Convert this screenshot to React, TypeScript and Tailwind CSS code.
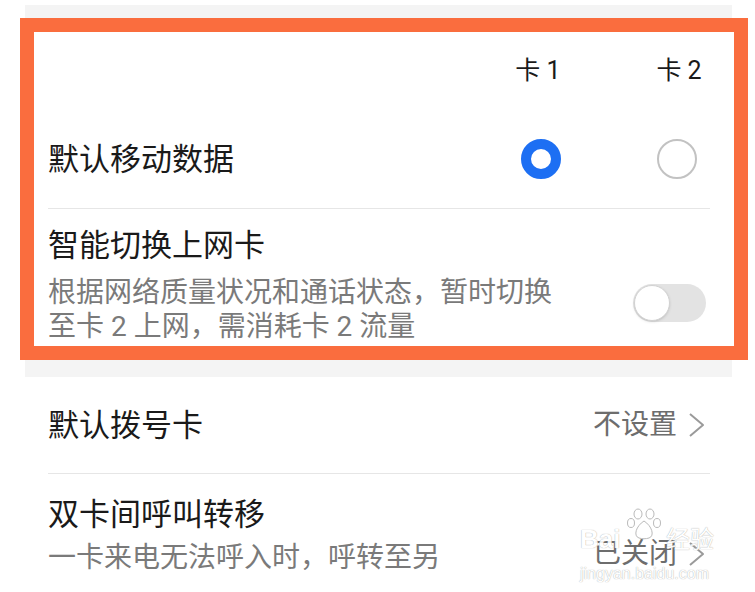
import { ReactNode } from "react";

const font = "font-[Roboto,'Noto_Sans_CJK_SC',sans-serif]";

function Chevron() {
  return (
    <svg width="18" height="24" viewBox="0 0 18 24" className="ml-[10px]">
      <polyline
        points="3,1 16,12 3,23"
        fill="none"
        stroke="#9a9a9a"
        strokeWidth="2"
        strokeLinejoin="round"
      />
    </svg>
  );
}

function RightValue({ children }: { children: ReactNode }) {
  return (
    <div className="flex items-center text-[28px] leading-none text-[#6d6d6d] mr-[5px]">
      <span>{children}</span>
      <Chevron />
    </div>
  );
}

export default function App() {
  return (
    <div className={`w-[755px] h-[592px] overflow-hidden bg-white relative ${font}`}>
      <div className="h-[5px]" />
      <div className="ml-[25px] w-[707px] h-[13px] bg-[#f4f4f4]" />

      {/* highlighted card */}
      <div className="ml-[20px] w-[728px] h-[342px] border-[14px] border-[#fa6d3e] bg-white">
        <div className="pl-[14px] pr-[24px]">
          {/* column headers */}
          <div className="flex items-center h-[78px]">
            <div className="flex-1" />
            <div className="w-[40px] flex justify-center">
              <span className="whitespace-nowrap text-[25px] text-[#1a1a1a] -ml-[6px]">卡 1</span>
            </div>
            <div className="w-[96px]" />
            <div className="w-[40px] flex justify-center">
              <span className="whitespace-nowrap text-[25px] text-[#1a1a1a] ml-[4px]">卡 2</span>
            </div>
            <div className="w-[13px]" />
          </div>

          {/* default mobile data */}
          <div className="flex items-center h-[98px]">
            <div className="flex-1 text-[31px] text-[#1a1a1a] leading-none">默认移动数据</div>
            <div className="w-[40px] h-[40px] rounded-full border-[10px] border-[#1d6ff3] bg-white" />
            <div className="w-[96px]" />
            <div className="w-[40px] h-[40px] rounded-full border-2 border-[#c2c2c2] bg-white" />
            <div className="w-[13px]" />
          </div>
          <div className="h-px bg-[#e6e6e6]" />

          {/* smart switch */}
          <div className="flex pt-[19px]">
            <div className="flex-1">
              <div className="text-[31px] leading-[36px] text-[#1a1a1a]">智能切换上网卡</div>
              <div className="mt-[12px] text-[28px] leading-[34px] text-[#7a7a7a]">
                根据网络质量状况和通话状态，暂时切换
                <br />
                至卡 2 上网，需消耗卡 2 流量
              </div>
            </div>
            <div className="mt-[56px] mr-[4px] w-[73px] h-[38px] rounded-full bg-[#e3e3e3] flex items-center pl-[1px]">
              <div className="w-[36px] h-[36px] rounded-full bg-white border border-[#d2d2d2] shadow-sm" />
            </div>
          </div>
        </div>
      </div>

      <div className="ml-[25px] w-[707px] h-[17px] bg-[#f4f4f4]" />

      {/* lower list */}
      <div className="ml-[48px] w-[662px]">
        <div className="flex items-center justify-between h-[96px]">
          <div className="text-[31px] leading-none text-[#1a1a1a]">默认拨号卡</div>
          <RightValue>不设置</RightValue>
        </div>
        <div className="h-px bg-[#e6e6e6]" />
        <div className="flex justify-between pt-[23px]">
          <div>
            <div className="text-[31px] leading-[36px] text-[#1a1a1a]">双卡间呼叫转移</div>
            <div className="mt-[8px] text-[28px] leading-[34px] text-[#7a7a7a]">
              一卡来电无法呼入时，呼转至另
            </div>
          </div>
          <div className="mt-[43px]">
            <RightValue>已关闭</RightValue>
          </div>
        </div>
      </div>

      {/* watermark */}
      <div className="absolute left-[580px] top-[508px] w-[136px] pointer-events-none text-white opacity-90 [text-shadow:0_0_1px_#8f8f8f]">
        <svg width="36" height="32" viewBox="0 0 36 32" className="ml-[46px]">
          <g fill="white" stroke="#b3b3b3" strokeWidth="1">
            <ellipse cx="12" cy="6" rx="4" ry="5" />
            <ellipse cx="24" cy="6" rx="4" ry="5" />
            <ellipse cx="5" cy="15" rx="3.5" ry="4.5" />
            <ellipse cx="31" cy="15" rx="3.5" ry="4.5" />
            <path d="M18 13 C 10 18, 7 28, 13 30 C 16 31, 20 31, 23 30 C 29 28, 26 18, 18 13 Z" />
          </g>
        </svg>
        <div className="flex justify-between items-end -mt-[14px] leading-none">
          <span className="text-[26px] font-['Liberation_Sans',sans-serif] font-bold">Bai</span>
          <span className="text-[24px] mr-[2px]">经验</span>
        </div>
        <div className="text-[16px] leading-none mt-[14px] font-['Liberation_Sans',sans-serif]">jingyan.baidu.com</div>
      </div>
    </div>
  );
}
